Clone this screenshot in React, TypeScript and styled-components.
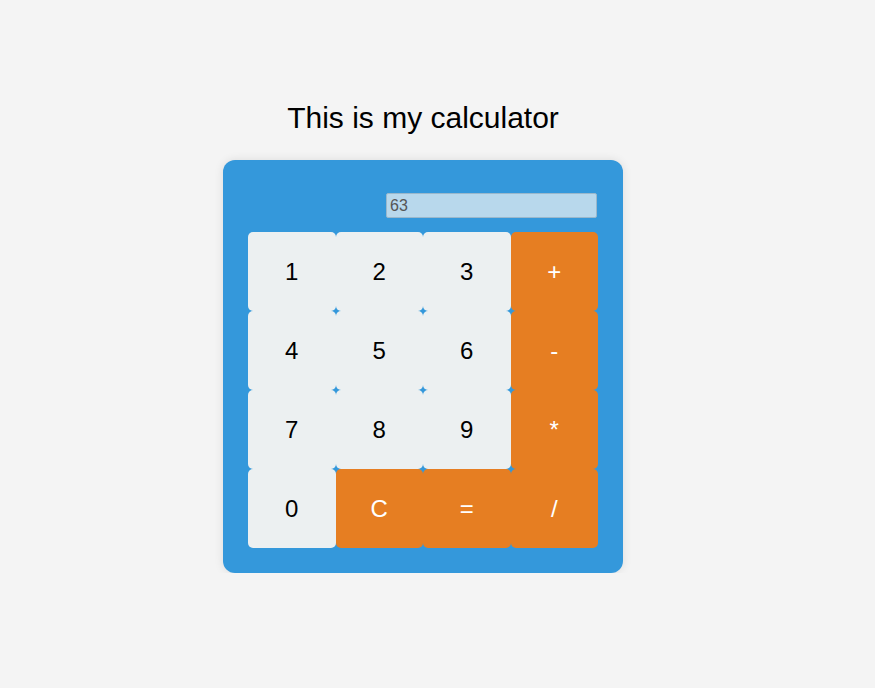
import React from "react";
import styled, { createGlobalStyle } from "styled-components";

const Global = createGlobalStyle`
  html, body { margin: 0; padding: 0; background: #f4f4f4; }
  body { font-family: "Liberation Sans", Arial, sans-serif; }
`;

const Page = styled.div`
  width: 846px;
  display: flex;
  flex-direction: column;
  align-items: center;
  padding-top: 100px;
`;

const Title = styled.h1`
  margin: 0 0 24px;
  font-size: 30px;
  font-weight: normal;
  line-height: 36px;
  color: #000;
`;

const Calculator = styled.div`
  width: 350px;
  padding: 25px;
  background: #3498db;
  border-radius: 12px;
  box-shadow: 0 0 10px rgba(0, 0, 0, 0.1);
  display: flex;
  flex-direction: column;
`;

const Display = styled.input`
  align-self: flex-end;
  box-sizing: border-box;
  width: 211px;
  height: 25px;
  margin: 8px 1px 14px 0;
  padding: 0 3px;
  border: 1px solid #9ab8cc;
  border-radius: 2px;
  background: #b8d8ec;
  color: #555;
  font-family: "Liberation Sans", Arial, sans-serif;
  font-size: 16px;
  outline: none;
`;

const Grid = styled.div`
  display: grid;
  grid-template-columns: repeat(4, 1fr);
  grid-auto-rows: 79px;
`;

const Key = styled.button<{ $op?: boolean }>`
  border: none;
  margin: 0;
  border-radius: 5px;
  background: ${(p) => (p.$op ? "#e67e22" : "#ecf0f1")};
  color: ${(p) => (p.$op ? "#fff" : "#000")};
  font-family: "Liberation Sans", Arial, sans-serif;
  font-size: 24px;
  cursor: pointer;
`;

const keys: [string, boolean][] = [
  ["1", false], ["2", false], ["3", false], ["+", true],
  ["4", false], ["5", false], ["6", false], ["-", true],
  ["7", false], ["8", false], ["9", false], ["*", true],
  ["0", false], ["C", true], ["=", true], ["/", true],
];

export default function App() {
  return (
    <>
      <Global />
      <Page>
        <Title>This is my calculator</Title>
        <Calculator>
          <Display type="text" readOnly value="63" />
          <Grid>
            {keys.map(([k, op]) => (
              <Key key={k} $op={op}>{k}</Key>
            ))}
          </Grid>
        </Calculator>
      </Page>
    </>
  );
}
